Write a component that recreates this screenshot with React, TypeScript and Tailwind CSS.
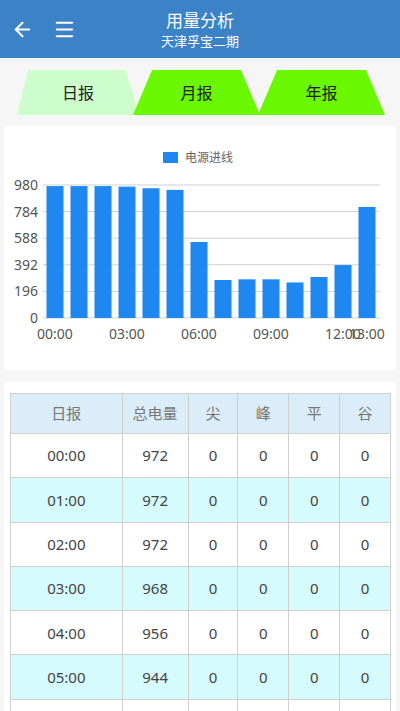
import { ArrowLeft, Menu } from "lucide-react";

const rows = [
  { t: "00:00", v: 972 },
  { t: "01:00", v: 972 },
  { t: "02:00", v: 972 },
  { t: "03:00", v: 968 },
  { t: "04:00", v: 956 },
  { t: "05:00", v: 944 },
  { t: "06:00", v: 560 },
  { t: "07:00", v: 280 },
  { t: "08:00", v: 285 },
  { t: "09:00", v: 285 },
  { t: "10:00", v: 262 },
  { t: "11:00", v: 302 },
  { t: "12:00", v: 390 },
  { t: "13:00", v: 818 },
];

const ticks = [980, 784, 588, 392, 196, 0];

function Chart() {
  const top = 59;
  const base = 192;
  const h = base - top;
  return (
    <svg width="392" height="244" className="block" fontFamily='"Noto Sans", "Noto Sans CJK SC", sans-serif'>
      <rect x="159" y="26" width="15" height="11" fill="#1e88f0" />
      <text x="181" y="36" fontSize="12" fill="#666">电源进线</text>
      {ticks.map((v, i) => {
        const y = top + (h / 5) * i;
        return (
          <g key={v}>
            <line x1="39" x2="376" y1={y} y2={y} stroke="#cfcfcf" strokeWidth="1" />
            <text x="34" y={y + 5} fontSize="14" fill="#555" textAnchor="end">{v}</text>
          </g>
        );
      })}
      {rows.map((r, i) => {
        const bh = (r.v / 980) * h;
        return <rect key={r.t} x={42.5 + 24 * i} y={base - bh} width="17" height={bh} fill="#1e88f0" />;
      })}
      {[0, 3, 6, 9, 12, 13].map((i) => (
        <text key={i} x={51 + 24 * i} y="213" fontSize="14" fill="#555" textAnchor="middle">
          {rows[i].t}
        </text>
      ))}
    </svg>
  );
}

export default function App() {
  return (
    <div className="min-h-[711px] bg-[#f6f6f6] font-['Noto_Sans','Noto_Sans_CJK_SC',sans-serif]">
      <div className="relative h-[58px] bg-[#3b83c6] text-white flex flex-col items-center justify-center">
        <div className="absolute left-[11px] top-[18px] flex items-center gap-[19px]">
          <ArrowLeft size={23} strokeWidth={2.2} />
          <Menu size={23} strokeWidth={2.2} />
        </div>
        <div className="text-[17px] leading-[22px] mt-[2px]">用量分析</div>
        <div className="text-[13px] leading-[18px]">天津孚宝二期</div>
      </div>

      <div className="flex pt-[12px] pl-[17px] h-[57px]">
        <div className="w-[122px] h-[45px] bg-[#cdfccd] flex items-center justify-center text-[16px] text-[#222] [clip-path:polygon(9%_0,89%_0,100%_100%,0_100%)]">
          日报
        </div>
        <div className="w-[127px] h-[45px] -ml-[6px] bg-[#6af700] flex items-center justify-center text-[16px] text-[#222] [clip-path:polygon(15%_0,85%_0,100%_100%,0_100%)]">
          月报
        </div>
        <div className="w-[127px] h-[45px] -ml-[2px] bg-[#6af700] flex items-center justify-center text-[16px] text-[#222] [clip-path:polygon(15%_0,85%_0,100%_100%,0_100%)]">
          年报
        </div>
      </div>

      <div className="mx-[4px] mt-[11px] bg-white h-[244px]">
        <Chart />
      </div>

      <div className="mx-[4px] mt-[12px] bg-white pt-[11px] px-[6px]">
        <table className="w-[381px] border-collapse text-[15px] text-center text-[#444]">
          <thead>
            <tr className="bg-[#dbedf9] text-[#777] h-[40px]">
              <th className="font-normal border border-[#cfcfcf] w-[112px]">日报</th>
              <th className="font-normal border border-[#cfcfcf] w-[66px]">总电量</th>
              <th className="font-normal border border-[#cfcfcf] w-[50px]">尖</th>
              <th className="font-normal border border-[#cfcfcf] w-[51px]">峰</th>
              <th className="font-normal border border-[#cfcfcf] w-[51px]">平</th>
              <th className="font-normal border border-[#cfcfcf] w-[51px]">谷</th>
            </tr>
          </thead>
          <tbody>
            {rows.map((r, i) => (
              <tr key={r.t} className={i % 2 === 1 ? "bg-[#d6fbfd] h-[44.3px]" : "bg-white h-[44.3px]"}>
                <td className="border border-[#cfcfcf]">{r.t}</td>
                <td className="border border-[#cfcfcf]">{r.v}</td>
                <td className="border border-[#cfcfcf]">0</td>
                <td className="border border-[#cfcfcf]">0</td>
                <td className="border border-[#cfcfcf]">0</td>
                <td className="border border-[#cfcfcf]">0</td>
              </tr>
            ))}
          </tbody>
        </table>
      </div>
    </div>
  );
}
